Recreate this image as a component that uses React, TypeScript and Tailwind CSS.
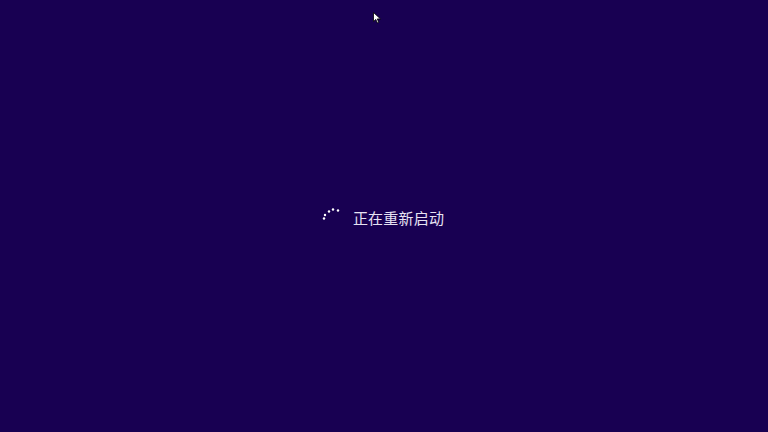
export default function App() {
  return (
    <div className="relative h-[432px] w-full overflow-hidden bg-[#180052]">
      {/* mouse pointer */}
      <svg className="absolute left-[373px] top-[12px]" width="9" height="12" viewBox="0 0 9 12">
        <path d="M0.5 0.5 L0.5 9.5 L2.8 7.4 L4.4 11 L5.8 10.4 L4.3 6.9 L7.5 6.9 Z" fill="#ffffff" stroke="#000000" strokeWidth="0.8" />
      </svg>

      <div className="flex h-full items-center justify-center pr-[2px] pt-[3px]">
        <div className="flex items-center gap-[13px]">
          <svg className="mb-[7px]" width="18" height="14" viewBox="0 0 18 14">
            <circle cx="2" cy="11.5" r="1.2" fill="#ffffff" />
            <circle cx="3" cy="8" r="1.2" fill="#ffffff" />
            <circle cx="7" cy="4.5" r="1.2" fill="#ffffff" />
            <circle cx="11" cy="2.5" r="1.2" fill="#ffffff" />
            <circle cx="16" cy="3.5" r="1.2" fill="#ffffff" />
          </svg>
          <span
            className="text-[15px] leading-none tracking-[0.2px] text-[#e6e2f2]"
            style={{ fontFamily: '"Noto Sans CJK SC", "Noto Sans", sans-serif' }}
          >
            正在重新启动
          </span>
        </div>
      </div>
    </div>
  )
}
